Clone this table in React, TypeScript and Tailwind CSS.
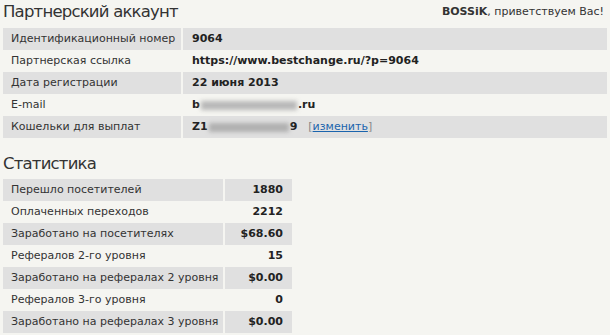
import React from "react";

const info: [string, React.ReactNode][] = [
  ["Идентификационный номер", <b>9064</b>],
  ["Партнерская ссылка", <b>https://www.bestchange.ru/?p=9064</b>],
  ["Дата регистрации", <b>22 июня 2013</b>],
  [
    "E-mail",
    <b className="flex items-center">
      b<span className="inline-block h-[9px] w-[96px] bg-[#b8b8b8] blur-[2px] mx-[1px]" />.ru
    </b>,
  ],
  [
    "Кошельки для выплат",
    <span className="flex items-center">
      <b>Z1</b>
      <span className="inline-block h-[9px] w-[80px] bg-[#b0b0b0] blur-[2px] mx-[1px]" />
      <b>9</b>
      <span className="ml-[11px] text-[#888]">[</span>
      <a className="text-[#1a64ad] underline">изменить</a>
      <span className="text-[#888]">]</span>
    </span>,
  ],
];

const stats: [string, string][] = [
  ["Перешло посетителей", "1880"],
  ["Оплаченных переходов", "2212"],
  ["Заработано на посетителях", "$68.60"],
  ["Рефералов 2-го уровня", "15"],
  ["Заработано на рефералах 2 уровня", "$0.00"],
  ["Рефералов 3-го уровня", "0"],
  ["Заработано на рефералах 3 уровня", "$0.00"],
];

export default function App() {
  return (
    <div
      className="w-[610px] h-[335px] bg-[#f5f5f1] text-[#333] overflow-hidden"
      style={{ fontFamily: '"DejaVu Sans", Verdana, sans-serif' }}
    >
      <div className="flex items-end justify-between pl-[3px] pr-[6px] h-[28px] pb-[5px]">
        <div className="text-[16.5px] leading-[22px] tracking-[-0.8px] text-[#333]">Партнерский аккаунт</div>
        <div className="text-[11px] leading-[14px] mb-[4px]">
          <b>BOSSiK</b>, приветствуем Вас!
        </div>
      </div>
      <div className="ml-[3px] w-[604px] text-[11px]">
        {info.map(([k, v], i) => (
          <div
            key={i}
            className={`flex h-[22px] items-center ${i % 2 === 0 ? "bg-[#e0e0e0]" : ""}`}
          >
            <div className="w-[180px] pl-[8px] border-r-2 border-[#f5f5f1] h-full flex items-center">
              {k}
            </div>
            <div className="pl-[9px] text-[#222]">{v}</div>
          </div>
        ))}
      </div>
      <div className="pl-[3px] mt-[15px] text-[16.5px] tracking-[-0.8px] leading-[22px] h-[26px]">Статистика</div>
      <div className="ml-[3px] w-[289px] text-[11px]">
        {stats.map(([k, v], i) => (
          <div
            key={i}
            className={`flex h-[22px] items-center ${i % 2 === 0 ? "bg-[#e0e0e0]" : ""}`}
          >
            <div className="w-[222px] pl-[8px] border-r-2 border-[#f5f5f1] h-full flex items-center">
              {k}
            </div>
            <div className="flex-1 text-right pr-[9px] font-bold text-[#222]">{v}</div>
          </div>
        ))}
      </div>
    </div>
  );
}
